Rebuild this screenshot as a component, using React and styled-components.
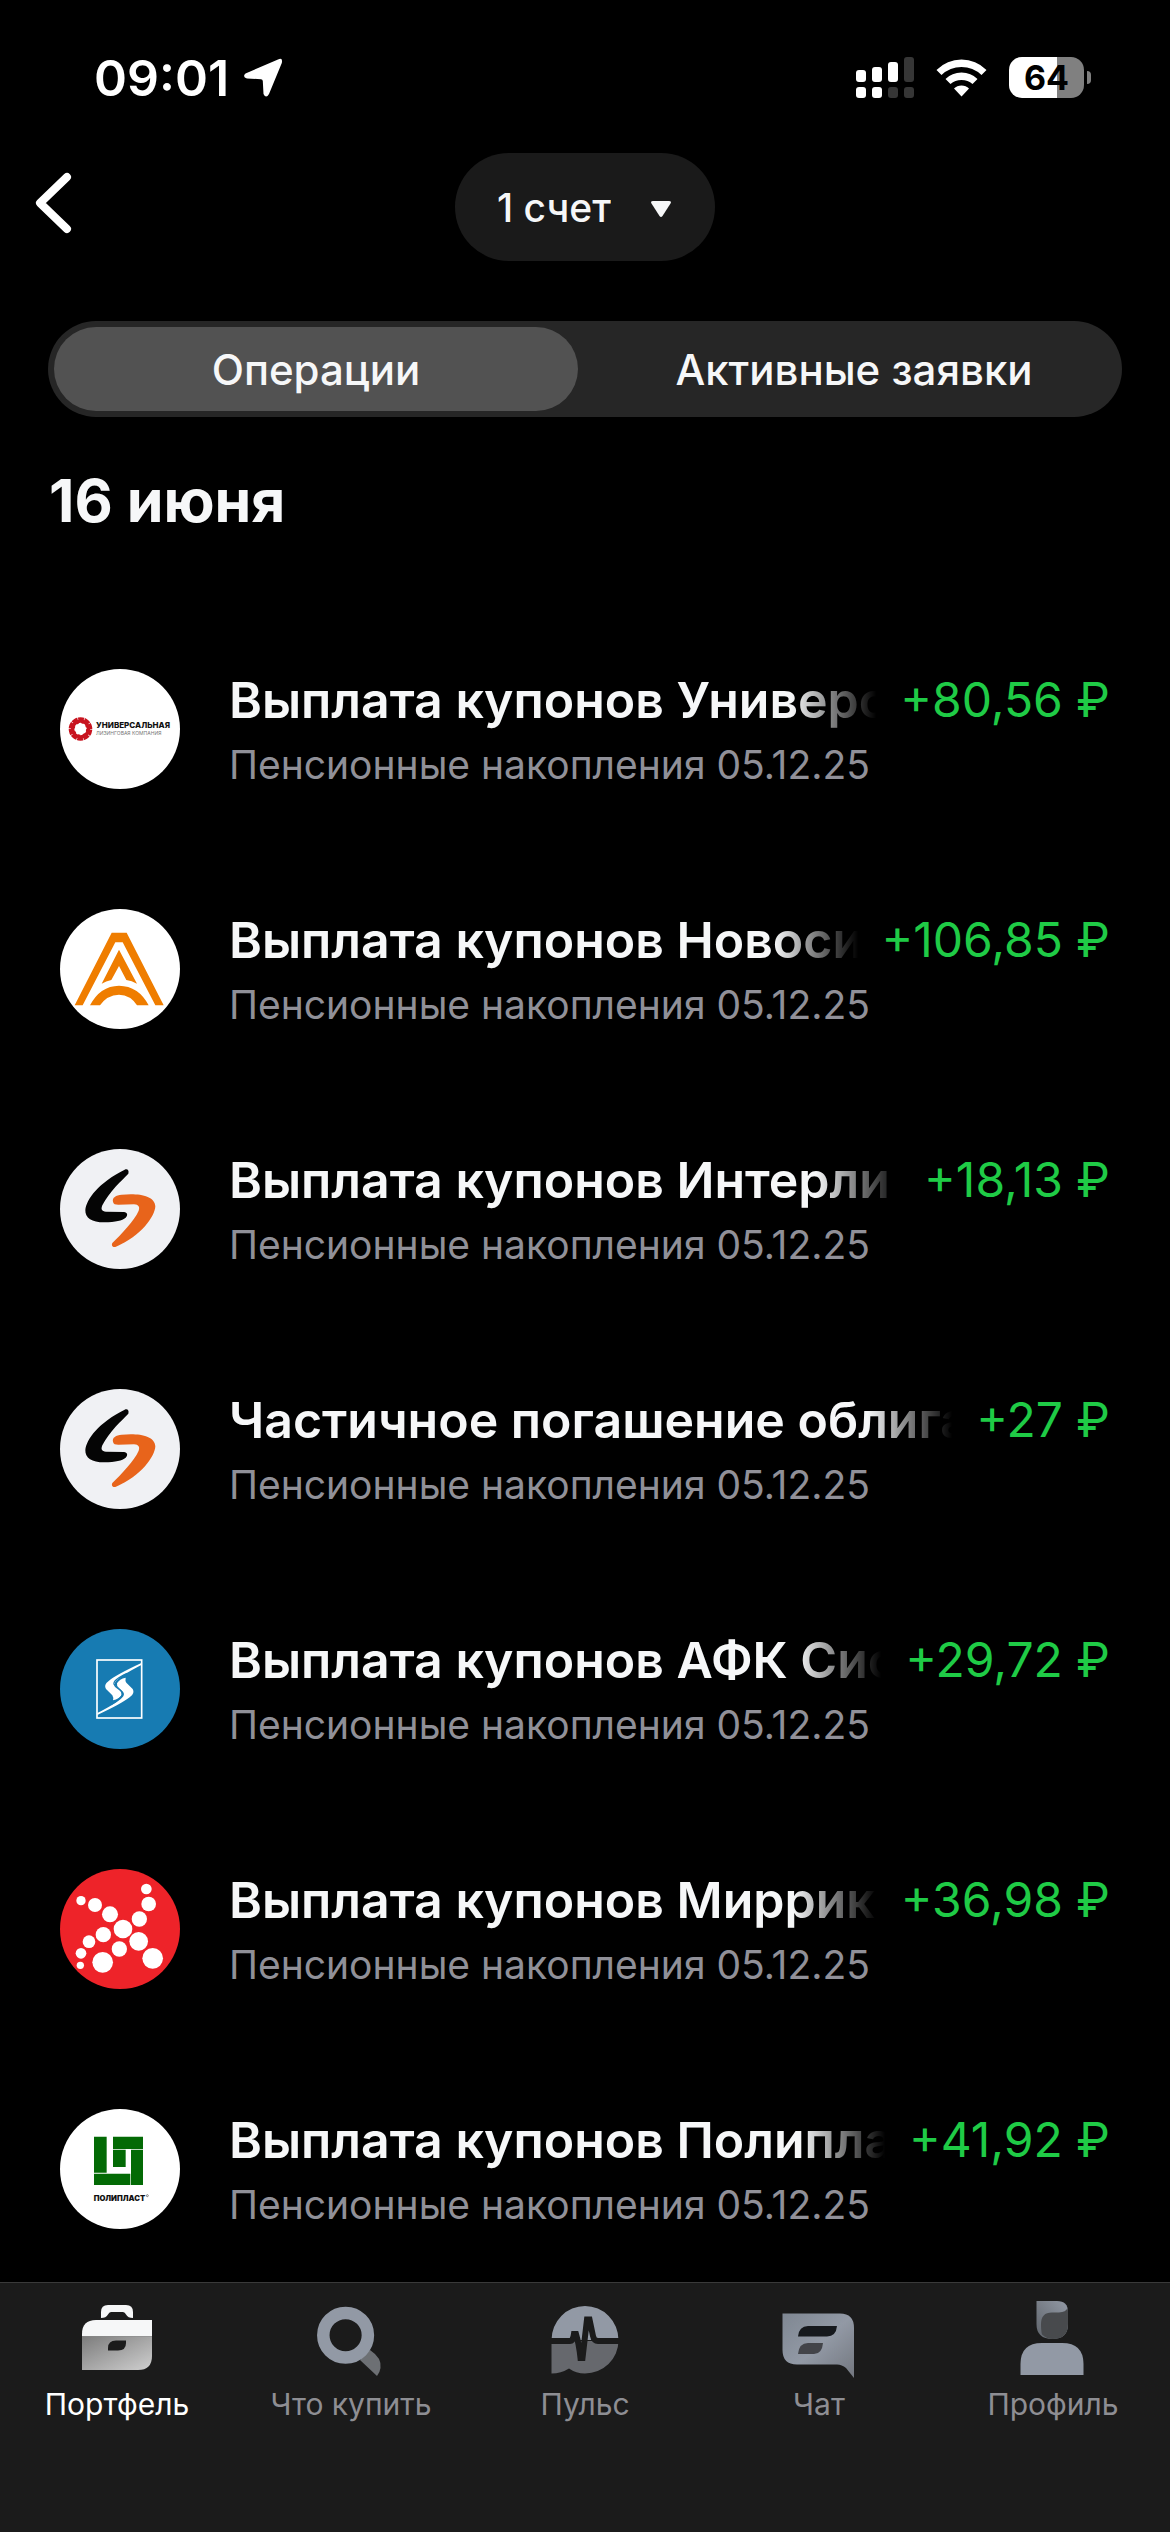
import React, { useState } from 'react';
import styled, { createGlobalStyle } from 'styled-components';

const GlobalStyle = createGlobalStyle`
  * {
    box-sizing: border-box;
  }
  body {
    margin: 0;
    background: #000;
    color: #f6f7f8;
    font-family: Inter, 'Liberation Sans', sans-serif;
  }
  button,
  select {
    font: inherit;
    color: inherit;
    border: 0;
    padding: 0;
    background: none;
    cursor: pointer;
  }
`;

const Screen = styled.div`
  min-height: 100vh;
  display: flex;
  flex-direction: column;
`;

const StatusBar = styled.div`
  display: flex;
  align-items: center;
  justify-content: space-between;
  height: 153px;
  padding: 2px 79px 0 94px;
  color: #fff;
`;

const StatusGroup = styled.div`
  display: flex;
  align-items: center;
  gap: ${({ $gap }) => $gap}px;
`;

const Clock = styled.time`
  font-size: 50px;
  line-height: 60px;
  font-weight: 600;
`;

const Battery = styled.div`
  display: flex;
  align-items: center;
  gap: 3px;
`;

const BatteryBody = styled.div`
  width: 75px;
  height: 41px;
  border-radius: 13px;
  background: linear-gradient(90deg, #fff 64%, #808080 64%);
  color: #000;
  font-size: 34px;
  line-height: 41px;
  font-weight: 700;
  text-align: center;
`;

const BatteryTip = styled.div`
  width: 4px;
  height: 13px;
  border-radius: 0 4px 4px 0;
  background: #808080;
`;

const Header = styled.header`
  display: grid;
  grid-template-columns: 1fr auto 1fr;
  align-items: center;
  padding: 0 32px;
`;

const BackButton = styled.button`
  display: flex;
  justify-self: start;
  padding-bottom: 8px;
`;

const AccountPicker = styled.div`
  position: relative;
  display: flex;
`;

const AccountSelect = styled.select`
  appearance: none;
  field-sizing: content;
  height: 108px;
  padding: 0 104px 0 42px;
  border-radius: 54px;
  background: #1a1a1a;
  font-size: 39px;
  font-weight: 500;
`;

const Caret = styled.svg`
  position: absolute;
  right: 43px;
  top: 47px;
  pointer-events: none;
`;

const Segments = styled.div`
  display: flex;
  gap: 14px;
  height: 96px;
  margin: 60px 48px 0;
  padding: 6px;
  border-radius: 48px;
  background: #262626;
`;

const Segment = styled.button`
  flex: 1 1 0;
  border-radius: 42px;
  font-size: 42px;
  font-weight: 500;
  background: ${({ $active }) => ($active ? '#525252' : 'transparent')};
`;

const Main = styled.main`
  flex: 1;
  padding: 48px 60px 0;
`;

const DayTitle = styled.h2`
  margin: 0 0 132px -11px;
  font-size: 59px;
  line-height: 72px;
  font-weight: 700;
`;

const OperationList = styled.ul`
  display: flex;
  flex-direction: column;
  gap: 120px;
  margin: 0;
  padding: 0;
  list-style: none;
`;

const Operation = styled.li`
  display: flex;
  gap: 49px;
`;

const Logo = styled.svg`
  flex: none;
  width: 120px;
  height: 120px;
  border-radius: 50%;
  background: ${({ $bg }) => $bg};
`;

const Details = styled.div`
  flex: 1;
  min-width: 0;
  display: flex;
  flex-direction: column;
  gap: 10px;
`;

const TopLine = styled.div`
  display: flex;
  gap: 24px;
  line-height: 62px;
`;

const Name = styled.span`
  flex: 1;
  min-width: 0;
  overflow: hidden;
  white-space: nowrap;
  font-size: 50px;
  font-weight: 600;
  mask-image: linear-gradient(to left, transparent, #000 84px);
`;

const Amount = styled.span`
  flex: none;
  color: #1fcb46;
  font-size: 48px;
`;

const AccountName = styled.span`
  color: #909098;
  font-size: 39px;
  line-height: 48px;
`;

const TabBar = styled.nav`
  display: flex;
  min-height: 250px;
  padding-top: 15px;
  background: #1b1b1b;
  border-top: 1px solid #3a3a3a;
`;

const Tab = styled.a`
  flex: 1 1 0;
  display: flex;
  flex-direction: column;
  align-items: center;
  gap: 4px;
  color: ${({ $active }) => ($active ? '#fff' : '#8e8e93')};
  font-size: 30px;
  line-height: 36px;
  text-decoration: none;
`;

const UniversalLogo = () => (
  <Logo $bg="#fff" viewBox="0 0 120 120">
    <circle cx="20.5" cy="60" r="9" fill="none" stroke="#c8141f" strokeWidth="5.6" />
    <circle cx="20.5" cy="60" r="11" fill="none" stroke="#fff" strokeWidth="3" strokeDasharray="0.6 6.31" />
    <circle cx="20.5" cy="60" r="6.4" fill="none" stroke="#c8141f" strokeWidth="1.4" strokeDasharray="2.4 2.63" />
    <text x="36" y="59" fontSize="8" fontWeight="800" fill="#111">УНИВЕРСАЛЬНАЯ</text>
    <text x="36" y="66" fontSize="5" fill="#777">ЛИЗИНГОВАЯ КОМПАНИЯ</text>
  </Logo>
);

const NovosibirskLogo = () => (
  <Logo $bg="#fff" viewBox="60 57 360 360" fill="#ef7d00">
    <path d="M104 346 215 128H260L371 346H346L248 157H226L128 346Z" />
    <path d="M237 179 291 281Q275 272 259 270L237 228 214 270Q198 273 185 281Z" />
    <path d="M150 346Q180 288 237 287 296 288 326 346H291Q272 315 237 314 201 315 180 346Z" />
  </Logo>
);

const InterleasingLogo = () => (
  <Logo $bg="#f0f1f4" viewBox="60 57 360 360">
    <path
      d="M254 119C262 115 268 121 265 131C245 152 209 183 187 226C182 238 185 244 198 245L252 246C262 247 265 256 257 263C246 272 228 276 192 277C156 277 135 264 136 240C139 207 176 158 254 119Z"
      fill="#050505"
    />
    <path
      d="M219 215C216 202 228 196 245 194C291 189 345 195 346 229C345 258 304 319 228 350C219 354 213 347 217 339C244 312 283 272 296 242C300 231 296 224 282 223L235 224C226 224 220 222 219 215Z"
      fill="#e8641b"
    />
  </Logo>
);

const SistemaLogo = () => (
  <Logo $bg="#177bb2" viewBox="60 57 360 360">
    <rect x="171" y="150" width="134" height="174" fill="none" stroke="#fff" strokeWidth="5" />
    <g fill="#fff">
      <path d="M304 159Q229 194 207 212 190 224 198 237L217 256Q221 262 219 271 238 267 245 254 247 247 239 240L227 229Q220 220 230 211 246 195 304 165Z" />
      <path
        transform="rotate(180 238 237)"
        d="M304 159Q229 194 207 212 190 224 198 237L217 256Q221 262 219 271 238 267 245 254 247 247 239 240L227 229Q220 220 230 211 246 195 304 165Z"
      />
    </g>
    <path d="M262 190Q219 209 222 222 224 229 236 237 251 247 246 257 239 268 213 284" fill="none" stroke="#177bb2" strokeWidth="4" />
  </Logo>
);

const mirricoDots = [
  [319, 117, 16], [326, 162, 22], [298, 207, 23], [249, 237, 28], [296, 274, 28],
  [338, 325, 31], [238, 297, 23], [188, 337, 31], [210, 193, 24], [165, 165, 21],
  [123, 152, 14], [190, 254, 23], [147, 275, 19], [123, 310, 16], [121, 346, 11],
];

const MirricoLogo = () => (
  <Logo $bg="#ee2329" viewBox="60 57 360 360" fill="#fff">
    {mirricoDots.map(([cx, cy, r]) => (
      <circle key={`${cx}-${cy}`} cx={cx} cy={cy} r={r} />
    ))}
  </Logo>
);

const PolyplastLogo = () => (
  <Logo $bg="#fff" viewBox="60 57 360 360">
    <g fill="#036a05">
      <path d="M162 140H200V248H162Z" />
      <path d="M219 140H309V177H219Z" />
      <path d="M219 179H257V231H219Z" />
      <path d="M273 179H309V285H273Z" />
      <path d="M162 251H271V285H162Z" />
    </g>
    <text x="161" y="333" fontSize="23" fontWeight="900" fill="#111">ПОЛИПЛАСТ</text>
    <circle cx="322" cy="317" r="3" fill="none" stroke="#555" strokeWidth="2" />
  </Logo>
);

const PortfolioIcon = () => (
  <svg width="84" height="84" viewBox="0 0 84 84">
    <defs>
      <linearGradient id="case" x1="0" y1="0" x2="1" y2="1">
        <stop offset="0" stopColor="#7c7c7c" />
        <stop offset="1" stopColor="#cfcfcf" />
      </linearGradient>
    </defs>
    <path d="M26 20V14Q26 7 33 7H51Q58 7 58 14V20Q53 20 51 16.500 50 14 48 14H36Q34 14 33 16.500 31 20 26 20Z" fill="#f6f7f8" />
    <path d="M7 38.500V36Q7 22 21 22H77V38.500Z" fill="#f6f7f8" />
    <path d="M7 38.500H77V58Q77 72 63 72H7Z" fill="url(#case)" />
    <path d="M33 52.500V50Q33 42.500 41 42.500H51V45Q51 52.500 43 52.500Z" fill="#1b1b1b" />
  </svg>
);

const SearchIcon = () => (
  <svg width="84" height="84" viewBox="0 0 84 84">
    <path d="M61 52Q73 60 71.500 70 71 74 68 78L51 62Z" fill="#6d7074" />
    <circle cx="36.600" cy="37.200" r="22.300" fill="none" stroke="#9299a5" strokeWidth="12.500" />
  </svg>
);

const PulseIcon = () => (
  <svg width="84" height="84" viewBox="0 0 84 84">
    <path d="M8.500 42A33.500 34 0 0 1 75.500 42Z" fill="#9299a5" />
    <path d="M8.500 43H75.500A33.500 33 0 0 1 42 75.500Q33 75.500 26 70.500 18 75.500 8.500 75.500Z" fill="#66686d" />
    <path
      d="M8 43H27Q30 43 31 36H33Q36 46 37.500 60H39.500L44 21.500H46.500L50 38Q51 43 55 43H77"
      fill="none"
      stroke="#1b1b1b"
      strokeWidth="6"
    />
  </svg>
);

const ChatIcon = () => (
  <svg width="84" height="84" viewBox="0 0 84 84">
    <defs>
      <linearGradient id="bubble" x1="0" y1="0" x2="1" y2="1">
        <stop offset="0" stopColor="#7f8792" />
        <stop offset="0.5" stopColor="#9299a5" />
        <stop offset="1" stopColor="#73777f" />
      </linearGradient>
    </defs>
    <path d="M5.500 15.500H63Q77 15.500 77 30V80L69 70Q65 66.500 60 66.500H20Q5.500 66.500 5.500 52Z" fill="url(#bubble)" />
    <path d="M21 38.500Q22 28 31 28H60Q59 38.500 50 38.500Z" fill="#16191d" />
    <path d="M21 56Q22 45 31 45H46Q45 56 37 56Z" fill="#434449" />
  </svg>
);

const ProfileIcon = () => (
  <svg width="84" height="84" viewBox="0 0 84 84">
    <defs>
      <linearGradient id="hair" x1="1" y1="0" x2="0" y2="1">
        <stop offset="0" stopColor="#9299a5" />
        <stop offset="1" stopColor="#5f646b" />
      </linearGradient>
    </defs>
    <path d="M25.500 3H46Q57 3 57 14V26Q57 41 41.500 41 25.500 41 25.500 26Z" fill="url(#hair)" />
    <path d="M56.500 10Q57 12 57 14V26Q57 41 41.500 41 36 41 31 36.500 30 33 30 26 30 14.500 41 14.500H48Q55 14 56.500 10Z" fill="#484a4d" />
    <path d="M9.500 77V66Q9.500 45 31 45H51Q72.500 45 72.500 66V77Z" fill="#9299a5" />
  </svg>
);

const operations = [
  { name: 'Выплата купонов Универс', amount: '+80,56 ₽', Icon: UniversalLogo },
  { name: 'Выплата купонов Новоси', amount: '+106,85 ₽', Icon: NovosibirskLogo },
  { name: 'Выплата купонов Интерли', amount: '+18,13 ₽', Icon: InterleasingLogo },
  { name: 'Частичное погашение облига', amount: '+27 ₽', Icon: InterleasingLogo },
  { name: 'Выплата купонов АФК Сис', amount: '+29,72 ₽', Icon: SistemaLogo },
  { name: 'Выплата купонов Миррик', amount: '+36,98 ₽', Icon: MirricoLogo },
  { name: 'Выплата купонов Полипла', amount: '+41,92 ₽', Icon: PolyplastLogo },
];

const tabs = [
  { label: 'Портфель', Icon: PortfolioIcon },
  { label: 'Что купить', Icon: SearchIcon },
  { label: 'Пульс', Icon: PulseIcon },
  { label: 'Чат', Icon: ChatIcon },
  { label: 'Профиль', Icon: ProfileIcon },
];

const segments = ['Операции', 'Активные заявки'];

const App = () => {
  const [segment, setSegment] = useState(segments[0]);

  return (
    <Screen>
      <GlobalStyle />
      <StatusBar>
        <StatusGroup $gap={14}>
          <Clock>09:01</Clock>
          <svg width="40" height="40" viewBox="0 0 40 40" fill="#fff">
            <path d="M35 1.500Q40 -1 38.800 5L26 36Q23 41 20.500 36L19.800 23Q19.600 21.400 18 21.200L4 20.500Q-1 19 2.500 15.500Z" />
          </svg>
        </StatusGroup>
        <StatusGroup $gap={22}>
          <svg width="58" height="42" viewBox="0 0 58 42" fill="#fff">
            <rect x="0" y="13" width="10" height="12" rx="3" />
            <rect x="16" y="10" width="10" height="15" rx="3" />
            <rect x="32" y="5" width="10" height="20" rx="3" />
            <rect x="48" y="0" width="10" height="25" rx="3" fill="#363636" />
            <rect x="0" y="30" width="10" height="11" rx="3" />
            <rect x="16" y="30" width="10" height="11" rx="3" />
            <rect x="32" y="30" width="10" height="11" rx="3" fill="#363636" />
            <rect x="48" y="30" width="10" height="11" rx="3" fill="#363636" />
          </svg>
          <svg width="51" height="38" viewBox="0 0 51 38" fill="#fff">
            <path d="M0.500 11Q11 0.500 25.500 0.500 40 0.500 50.500 11L45.500 16Q37 8 25.500 8 14 8 5.500 16Z" />
            <path d="M9.500 20Q16 13.500 25.500 13.500 35 13.500 41.500 20L36.500 25Q32 21 25.500 21 19 21 14.500 25Z" />
            <path d="M18 29.500Q21 26.500 25.500 26.500 30 26.500 33 29.500L25.500 37.500Z" />
          </svg>
          <Battery>
            <BatteryBody>64</BatteryBody>
            <BatteryTip />
          </Battery>
        </StatusGroup>
      </StatusBar>

      <Header>
        <BackButton aria-label="Назад">
          <svg width="44" height="64" viewBox="0 0 44 64" fill="none" stroke="#fff" strokeWidth="8" strokeLinecap="round" strokeLinejoin="round">
            <path d="M35 6 8 32 35 58" />
          </svg>
        </BackButton>
        <AccountPicker>
          <AccountSelect aria-label="Счет" defaultValue="1">
            <option value="1">1 счет</option>
          </AccountSelect>
          <Caret width="22" height="18" viewBox="0 0 22 18" fill="#f6f7f8">
            <path d="M3 1H19Q22 1 20.500 3.500L12.500 16Q11 18 9.500 16L1.500 3.500Q0 1 3 1Z" />
          </Caret>
        </AccountPicker>
      </Header>

      <Segments role="tablist">
        {segments.map((label) => (
          <Segment
            key={label}
            role="tab"
            aria-selected={label === segment}
            $active={label === segment}
            onClick={() => setSegment(label)}
          >
            {label}
          </Segment>
        ))}
      </Segments>

      <Main>
        <DayTitle>16 июня</DayTitle>
        <OperationList>
          {operations.map(({ name, amount, Icon }) => (
            <Operation key={name}>
              <Icon />
              <Details>
                <TopLine>
                  <Name>{name}</Name>
                  <Amount>{amount}</Amount>
                </TopLine>
                <AccountName>Пенсионные накопления 05.12.25</AccountName>
              </Details>
            </Operation>
          ))}
        </OperationList>
      </Main>

      <TabBar>
        {tabs.map(({ label, Icon }, index) => (
          <Tab key={label} href="#" $active={index === 0}>
            <Icon />
            {label}
          </Tab>
        ))}
      </TabBar>
    </Screen>
  );
};

export default App;
